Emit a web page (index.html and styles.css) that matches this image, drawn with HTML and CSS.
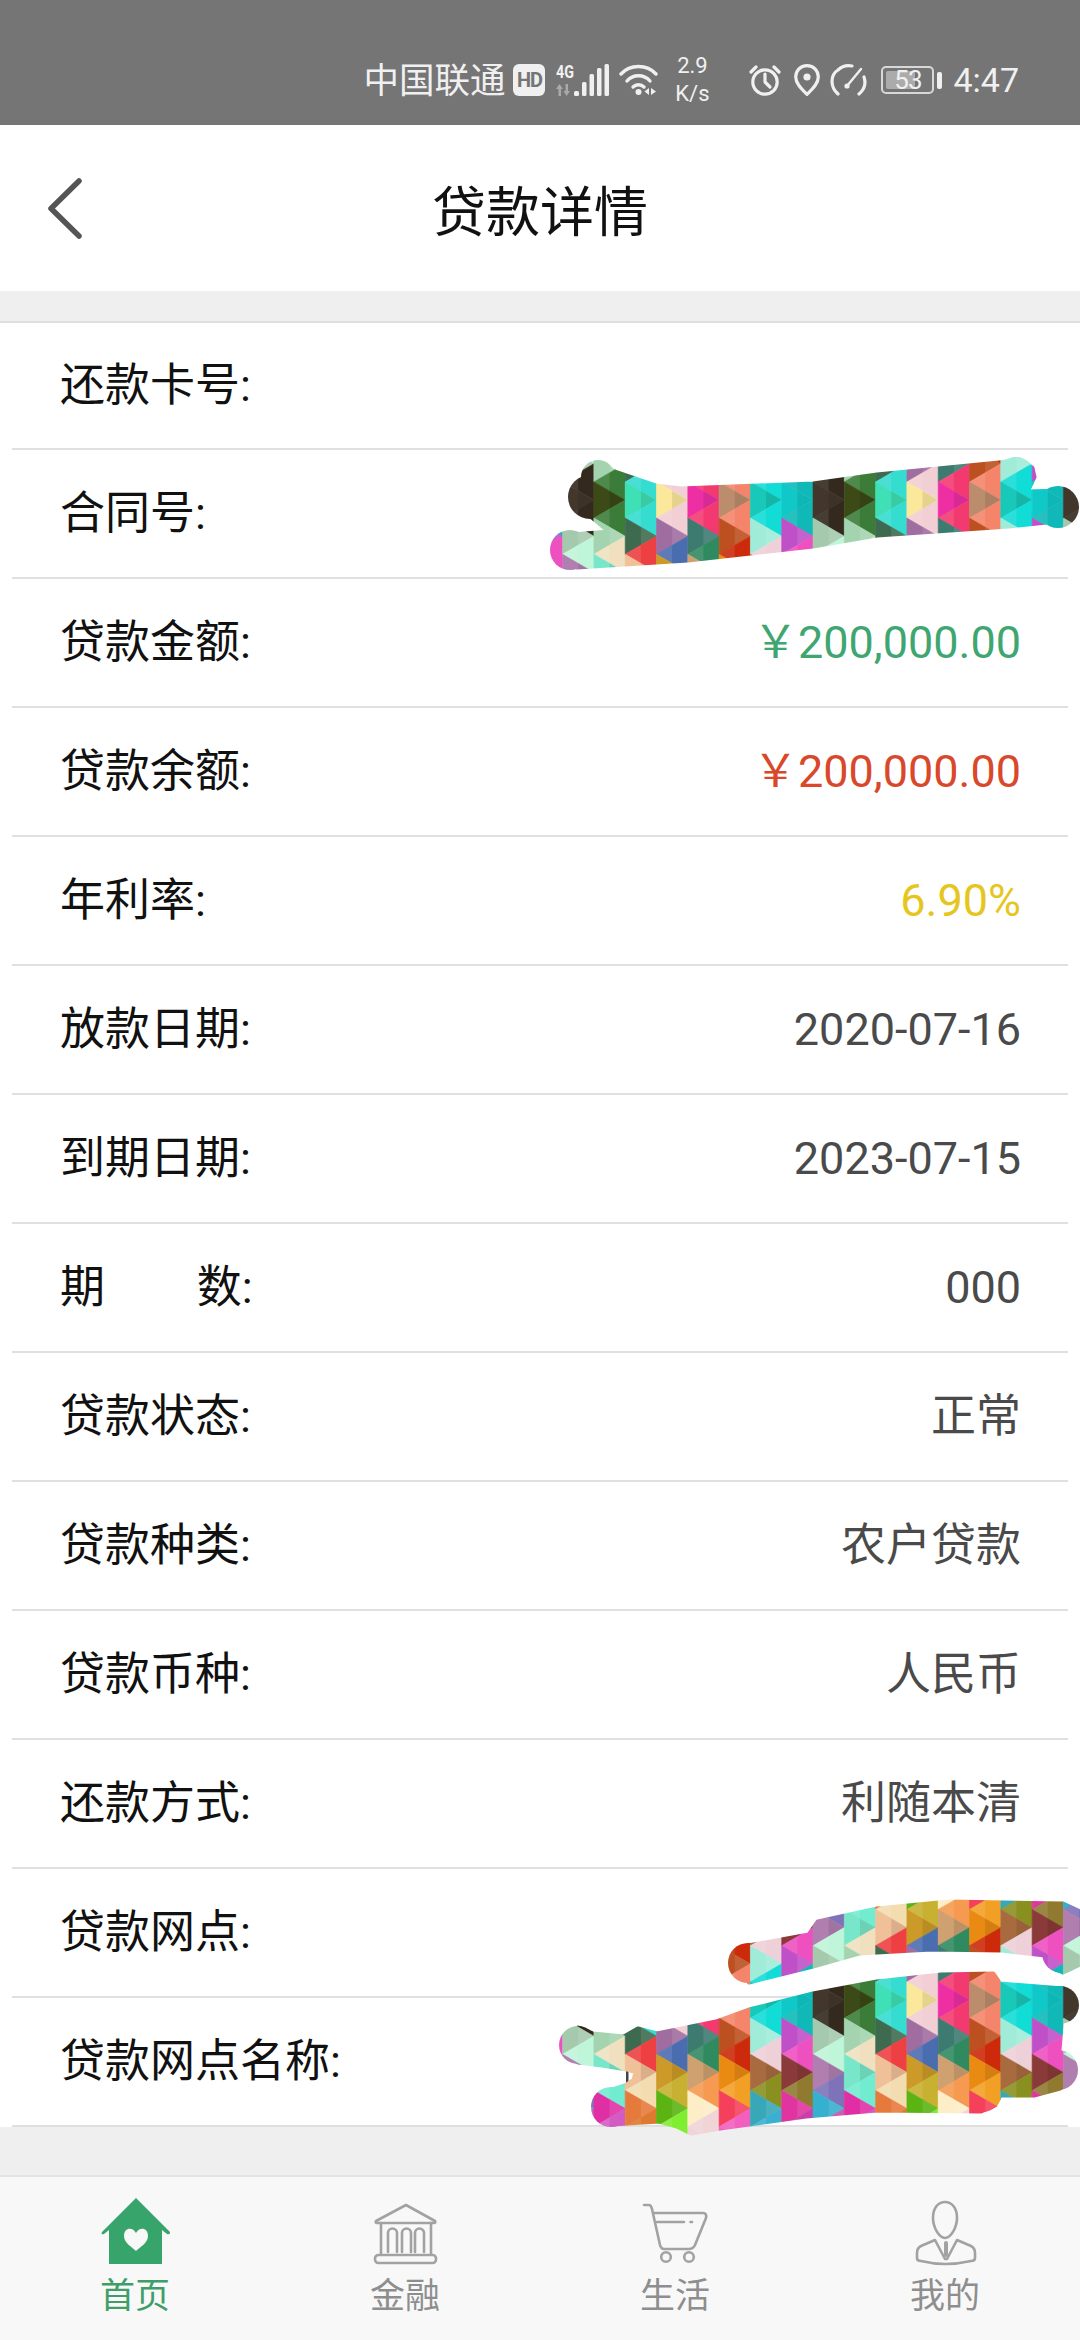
FILE: index.html
```html
<!DOCTYPE html>
<html lang="zh-CN">
<head>
    <meta charset="UTF-8">
    <meta name="viewport" content="width=device-width, initial-scale=1.0">
    <title>贷款详情</title>
    <link rel="stylesheet" href="styles.css">
</head>
<body>
<div class="page">

    <div class="status-bar">
        <span class="carrier">中国联通</span>
        <span class="hd-badge">HD</span>
        <svg class="ic-signal" width="53" height="38" viewBox="0 -6 53 38">
            <text x="0" y="14" class="net-text" textLength="18" lengthAdjust="spacingAndGlyphs">4G</text>
            <path d="M3.500 20 L7 25 H5 V32 H2.500 V25 H0Z M10.500 32 L7.500 27 H9.500 V20 H12 V27 H14Z" fill="#a9a9a9"/>
            <g fill="#f0f0f0">
                <rect x="18" y="27" width="5" height="5" rx="1.5"/>
                <rect x="26" y="18" width="4.5" height="14" rx="1.5"/>
                <rect x="33.5" y="10" width="4.5" height="22" rx="1.5"/>
                <rect x="41" y="4" width="4.5" height="28" rx="1.5"/>
                <rect x="48.5" y="0" width="4.5" height="32" rx="1.5"/>
            </g>
        </svg>
        <svg class="ic-wifi" width="39" height="32" viewBox="0 0 39 32">
            <g fill="none" stroke="#f0f0f0" stroke-width="3.4" stroke-linecap="round">
                <path d="M2 10 C11 0 28 0 37 10"/>
                <path d="M8 17 C14 10 25 10 31 17"/>
                <path d="M14 23 C17 20 22 20 25 23"/>
            </g>
            <circle cx="19.5" cy="28" r="3" fill="#f0f0f0"/>
            <path d="M30 24 V31 L25.5 27.5Z M32 24 V31 L37 27.5Z" fill="#f0f0f0"/>
        </svg>
        <span class="speed"><span>2.9</span><span>K/s</span></span>
        <svg class="ic-alarm" width="32" height="32" viewBox="0 0 32 32" fill="none" stroke="#f0f0f0" stroke-width="3.2" stroke-linecap="round" stroke-linejoin="round">
            <circle cx="16" cy="18" r="12.2"/>
            <path d="M16 10 V18 L21 23"/>
            <path d="M2 8 L7 3 M30 8 L25 3"/>
        </svg>
        <svg class="ic-pin" width="26" height="32" viewBox="0 0 26 32">
            <path d="M13 1.7 C6 1.7 1.7 7 1.7 13 C1.7 20 8 25.5 13 30.3 C18 25.5 24.3 20 24.3 13 C24.3 7 20 1.7 13 1.7Z" fill="none" stroke="#f0f0f0" stroke-width="3.2" stroke-linejoin="round"/>
            <circle cx="13" cy="13" r="3.6" fill="#f0f0f0"/>
        </svg>
        <svg class="ic-gauge" width="37" height="32" viewBox="0 0 37 32" fill="none" stroke="#f0f0f0" stroke-width="3.2" stroke-linecap="round">
            <path d="M8 30 C0 23 0 11 8 6 C12 2 17 1 22 2"/>
            <path d="M34 13 C36 19 35 25 29 30"/>
            <path d="M17 22 L31 5" stroke-width="2.4"/>
            <circle cx="17" cy="22" r="2.6" fill="#f0f0f0" stroke="none"/>
        </svg>
        <div class="battery">
            <div class="battery-shell">
                <div class="battery-fill"></div>
                <span class="battery-num">53</span>
            </div>
            <div class="battery-nub"></div>
        </div>
        <span class="clock">4:47</span>
    </div>

    <div class="top-bar">
        <svg class="back-icon" width="37" height="63" viewBox="0 0 37 63">
            <path d="M33 4 L5 31.5 L33 59" fill="none" stroke="#555" stroke-width="5.5" stroke-linecap="round" stroke-linejoin="round"/>
        </svg>
        <h1 class="page-title">贷款详情</h1>
    </div>

    <div class="detail-list">
        <div class="detail-row"><span class="row-label">还款卡号:</span></div>
        <div class="detail-row"><span class="row-label">合同号:</span></div>
        <div class="detail-row"><span class="row-label">贷款金额:</span><span class="row-value green">&#xFFE5;200,000.00</span></div>
        <div class="detail-row"><span class="row-label">贷款余额:</span><span class="row-value red">&#xFFE5;200,000.00</span></div>
        <div class="detail-row"><span class="row-label">年利率:</span><span class="row-value yellow">6.90%</span></div>
        <div class="detail-row"><span class="row-label">放款日期:</span><span class="row-value">2020-07-16</span></div>
        <div class="detail-row"><span class="row-label">到期日期:</span><span class="row-value">2023-07-15</span></div>
        <div class="detail-row"><span class="row-label label-spread">期&emsp;&emsp;数:</span><span class="row-value">000</span></div>
        <div class="detail-row"><span class="row-label">贷款状态:</span><span class="row-value">正常</span></div>
        <div class="detail-row"><span class="row-label">贷款种类:</span><span class="row-value">农户贷款</span></div>
        <div class="detail-row"><span class="row-label">贷款币种:</span><span class="row-value">人民币</span></div>
        <div class="detail-row"><span class="row-label">还款方式:</span><span class="row-value">利随本清</span></div>
        <div class="detail-row"><span class="row-label">贷款网点:</span></div>
        <div class="detail-row"><span class="row-label">贷款网点名称:</span></div>
    </div>

    <div class="spacer"></div>

    <div class="tab-bar">
        <div class="tab tab-active">
            <svg width="80" height="70" viewBox="0 0 80 70">
                <path d="M41 2 L75 36 Q75.500 39 72 38 L67 34 V68 H14 V34 L9 38 Q5.500 39 7 36Z" fill="#37a56b"/>
                <path d="M41 37 C38 31 29 31 29 40 C29 47 37 51 41 55 C45 51 53 47 53 40 C53 31 44 31 41 37Z" fill="#f8f8f8"/>
            </svg>
            <span>首页</span>
        </div>
        <div class="tab">
            <svg width="80" height="70" viewBox="0 0 80 70" fill="none" stroke="#a2a2a2" stroke-width="2.6" stroke-linecap="round" stroke-linejoin="round">
                <path d="M41 9 L70 25 Q71 27 69 27 H12 Q10 27 11 25Z"/>
                <path d="M16 27 V58 M66 27 V58"/>
                <path d="M23 56 V37 a4.500 4.500 0 0 1 9 0 V56 M37 56 V37 a4.500 4.500 0 0 1 9 0 V56 M50 56 V37 a4.500 4.500 0 0 1 9 0 V56"/>
                <rect x="10" y="59" width="61" height="8" rx="3.500"/>
            </svg>
            <span>金融</span>
        </div>
        <div class="tab">
            <svg width="80" height="70" viewBox="0 0 80 70" fill="none" stroke="#a2a2a2" stroke-width="2.6" stroke-linecap="round" stroke-linejoin="round">
                <path d="M9 9 H14 Q16 9 17 13 L25 49 Q26 53 29 53 H54 Q58 53 60 49 L71 22 Q72 17 68 17 H18"/>
                <path d="M22 26 H49 M55.500 26 H57"/>
                <circle cx="31" cy="61" r="4.800"/>
                <circle cx="54" cy="61" r="4.800"/>
            </svg>
            <span>生活</span>
        </div>
        <div class="tab">
            <svg width="80" height="70" viewBox="0 0 80 70" fill="none" stroke="#a2a2a2" stroke-width="2.6" stroke-linecap="round" stroke-linejoin="round">
                <path d="M40 6 C47 6 52 12 52 22 C52 31 46 42 40 42 C34 42 28 31 28 22 C28 12 33 6 40 6Z"/>
                <path d="M30 44 L16 50 Q12 52 12 57 V62 Q12 65 16 65 Q40 71 66 65 Q70 65 70 62 V57 Q70 52 66 50 L52 44 L42 63 H40Z"/>
                <path d="M41 47 V59" stroke-width="4"/>
            </svg>
            <span>我的</span>
        </div>
    </div>

    <!-- marker scribbles over the private values -->
    <svg class="scribbles" width="1080" height="2340" viewBox="0 0 1080 2340">
        <defs>
            <mask id="scribble-top" maskUnits="userSpaceOnUse" x="0" y="0" width="1080" height="2340">
                <g fill="#fff">
                    <path stroke="#fff" stroke-width="5" stroke-linejoin="round" d="M597 463 L615 472 L656 486 L681 489 L813 484 L877 475 L999 463 L1020 460 L1032 468 L1034 477 L1027 492 L1063 491 L1066 520 L1009 526 L877 535 L813 546 L688 560 L577 567 L572 535 L610 532 L591 516 L590 480Z"/>
                    <circle cx="590" cy="497" r="22"/>
                    <circle cx="598" cy="477" r="17"/>
                    <circle cx="1058" cy="507" r="21"/>
                    <circle cx="1016" cy="476" r="19"/>
                    <circle cx="570" cy="550" r="20"/>
                </g>
            </mask>
            <mask id="scribble-bottom" maskUnits="userSpaceOnUse" x="0" y="0" width="1080" height="2340">
                <g fill="#fff">
                    <path stroke="#fff" stroke-width="5" stroke-linejoin="round" d="M748 1946 L809 1935 L818 1922 L877 1909 L949 1902 L1063 1904 L1078 1911 L1078 1965 L1063 1972 L1051 1966 L1045 1955 L1002 1950 L931 1949 L859 1953 L813 1966 L749 1982Z"/>
                    <circle cx="748" cy="1963" r="20"/>
                    <circle cx="1062" cy="1953" r="20"/>
                    <path stroke="#fff" stroke-width="5" stroke-linejoin="round" d="M578 2028 L593 2034 L624 2037 L638 2029 L657 2034 L716 2022 L749 2010 L813 1994 L877 1982 L941 1975 L993 1974 L1000 1984 L1063 1989 L1061 2027 L1059 2050 L1060 2088 L1034 2095 L1000 2095 L995 2105 L981 2111 L877 2110 L806 2116 L720 2128 L691 2133 L677 2126 L659 2121 L612 2124 L612 2090 L627 2085 L634 2080 L636 2072 L627 2069 L602 2065 L578 2062Z"/>
                    <circle cx="578" cy="2045" r="19"/>
                    <circle cx="611" cy="2107" r="20"/>
                    <circle cx="1060" cy="2005" r="19"/>
                    <circle cx="1058" cy="2070" r="20"/>
                    <circle cx="982" cy="2092" r="20"/>
                </g>
            </mask>
        </defs>
        <rect x="626" y="2070" width="2.500" height="14" fill="#444"/>
        <g class="mosaic" data-center="500" mask="url(#scribble-top)"></g>
        <g class="mosaic" data-center="2000" mask="url(#scribble-bottom)"></g>
    </svg>

</div>
<script src="mosaic.js"></script>
</body>
</html>
```

FILE: styles.css
```css
* {
    box-sizing: border-box;
}
body {
    margin: 0;
    background-color: #efefef;
    font-family: Roboto, "Noto Sans CJK SC", sans-serif;
}
.page {
    position: relative;
    width: 1080px;
    height: 2340px;
    display: flex;
    flex-direction: column;
    overflow: hidden;
}

/* status bar */
.status-bar {
    height: 125px;
    padding: 35px 61px 0 0;
    display: flex;
    align-items: center;
    justify-content: flex-end;
    background-color: #757575;
    color: #f0f0f0;
}
.carrier {
    padding-top: 2px;
    font-size: 35.5px;
    line-height: 42px;
}
.hd-badge {
    width: 32px;
    height: 32px;
    margin-left: 8px;
    border-radius: 6px;
    background-color: #f0f0f0;
    color: #757575;
    font-size: 20px;
    font-weight: 700;
    letter-spacing: -1px;
    line-height: 32px;
    text-align: center;
}
.net-text {
    font-family: Roboto, sans-serif;
    font-size: 18px;
    font-weight: 700;
    fill: #f0f0f0;
}
.ic-signal {
    margin: -6px 0 0 11px;
}
.ic-wifi {
    margin-left: 10px;
}
.speed {
    width: 36px;
    margin-left: 16px;
    display: flex;
    flex-direction: column;
    align-items: center;
    font-size: 22px;
    line-height: 28px;
}
.ic-alarm {
    margin-left: 39px;
}
.ic-pin {
    margin-left: 13px;
}
.ic-gauge {
    margin-left: 10px;
}
.battery {
    margin-left: 14px;
    display: flex;
    align-items: center;
    gap: 3px;
}
.battery-shell {
    position: relative;
    width: 53px;
    height: 28px;
    padding: 3px;
    border: 2px solid #d8d8d8;
    border-radius: 5px;
}
.battery-fill {
    width: 29px;
    height: 100%;
    border-radius: 2px;
    background-color: #ababab;
}
.battery-num {
    position: absolute;
    top: 0;
    left: 0;
    width: 100%;
    font-size: 26px;
    letter-spacing: -1px;
    line-height: 24px;
    text-align: center;
}
.battery-nub {
    width: 5px;
    height: 17px;
    border-radius: 2px;
    background-color: #f0f0f0;
}
.clock {
    margin-left: 11px;
    font-size: 34px;
    line-height: 40px;
}

/* title */
.top-bar {
    height: 166px;
    padding-left: 46px;
    display: grid;
    grid-template-columns: 1fr auto 1fr;
    align-items: center;
    background-color: #fff;
}
.page-title {
    margin: 0 46px 0 0;
    font-size: 54px;
    font-weight: 400;
    color: #111;
}

/* rows */
.detail-list {
    margin-top: 30px;
    border-top: 2px solid #e0e0e0;
    background-color: #fff;
}
.detail-row {
    height: 129px;
    margin: 0 12px;
    padding: 0 47px 0 48px;
    display: flex;
    align-items: center;
    justify-content: space-between;
    border-bottom: 2px solid #e0e0e0;
    font-size: 45px;
    line-height: 56px;
}
.detail-row:first-child {
    height: 127px;
}
.row-label {
    color: #111;
}
.label-spread {
    word-spacing: -1px;
}
.row-value {
    color: #4a4a4a;
}
.green {
    color: #3fa672;
}
.red {
    color: #d9482a;
}
.yellow {
    color: #e6c61e;
}

.spacer {
    flex: 1;
}

/* bottom tabs */
.tab-bar {
    height: 165px;
    display: grid;
    grid-template-columns: repeat(4, 1fr);
    border-top: 2px solid #e4e4e4;
    background-color: #f8f8f8;
}
.tab {
    padding-top: 19px;
    display: flex;
    flex-direction: column;
    align-items: center;
    gap: 7px;
    color: #8e8e8e;
    font-size: 35px;
    line-height: 48px;
}
.tab-active {
    color: #3f9e68;
}

.scribbles {
    position: absolute;
    top: 0;
    left: 0;
}
```

FILE: mosaic.js
```js
// colours of one strip, from the middle row outwards. the picture is mirrored around the middle row
const strips = [
    ["#43372c", "#33291c", "#a5c9ad", "#bff5d8", "#b07fb0", "#7e72b8", "#36b0cf", "#c85fb0"],
    ["#3b4a17", "#3b7c38", "#a3d4af", "#f0e0bf", "#78e6c9", "#72ecd0", "#e02fa5", "#d35bc4"],
    ["#3fe0b5", "#35dcd0", "#3e6b50", "#ee3f42", "#f0c098", "#f2dcb0", "#e67a3c", "#dc7a30"],
    ["#fbe89a", "#f2cfd4", "#a06da0", "#4a6db0", "#cc9a28", "#c8b030", "#5cb414", "#80ee30"],
    ["#ee2fa3", "#f23a70", "#3d7a70", "#2f8a60", "#cfa070", "#f59a50", "#fdeec8", "#f0d4d8"],
    ["#bc8d6c", "#f4856a", "#bc5020", "#cc2a0a", "#e98a12", "#f2a025", "#f5405c", "#f25fbe"],
    ["#18c8b8", "#12dcd6", "#a0ecd8", "#eed0d8", "#a86b40", "#8a9020", "#38a8b8", "#3ab0d0"],
    ["#10c8c8", "#10b8b8", "#c050c8", "#ee50c0", "#8a3a38", "#8f7a30", "#e035a0", "#c840a8"]
];
const colWidth = 31.3;
const step = 18.1;
const firstCol = 813 - colWidth * 8 * 2; // lines up with the dark strip at x=813

function addTriangle(group, points, fill, tint) {
    const tri = document.createElementNS("http://www.w3.org/2000/svg", "polygon");
    tri.setAttribute("points", points.map(p => p.join(",")).join(" "));
    tri.setAttribute("fill", fill);
    if (!tint) {
        // covers the hairline between neighbours
        tri.setAttribute("stroke", fill);
        tri.setAttribute("stroke-width", "0.6");
    }
    group.appendChild(tri);
}

document.querySelectorAll(".mosaic").forEach(group => {
    const center = Number(group.dataset.center);
    for (let col = 0; col < 26; col++) {
        const left = firstCol + col * colWidth;
        const right = left + colWidth;
        const strip = strips[col % 8];
        for (let k = -8; k <= 8; k++) {
            const y = center + k * step;
            const color = strip[Math.min(Math.abs(k), 7)];
            const even = k % 2 === 0;
            const base = even ? left : right;
            const apex = even ? right : left;
            addTriangle(group, [[base, y - step], [base, y + step], [apex, y]], color);
            // lighter small triangle at the tip gives the folded look of the original
            const mid = (base + apex) / 2;
            addTriangle(group, [[mid, y - step / 2], [mid, y + step / 2], [apex, y]],
                k % 4 === 0 ? "rgba(0,0,0,0.09)" : "rgba(255,255,255,0.1)", true);
        }
    }
});
```
